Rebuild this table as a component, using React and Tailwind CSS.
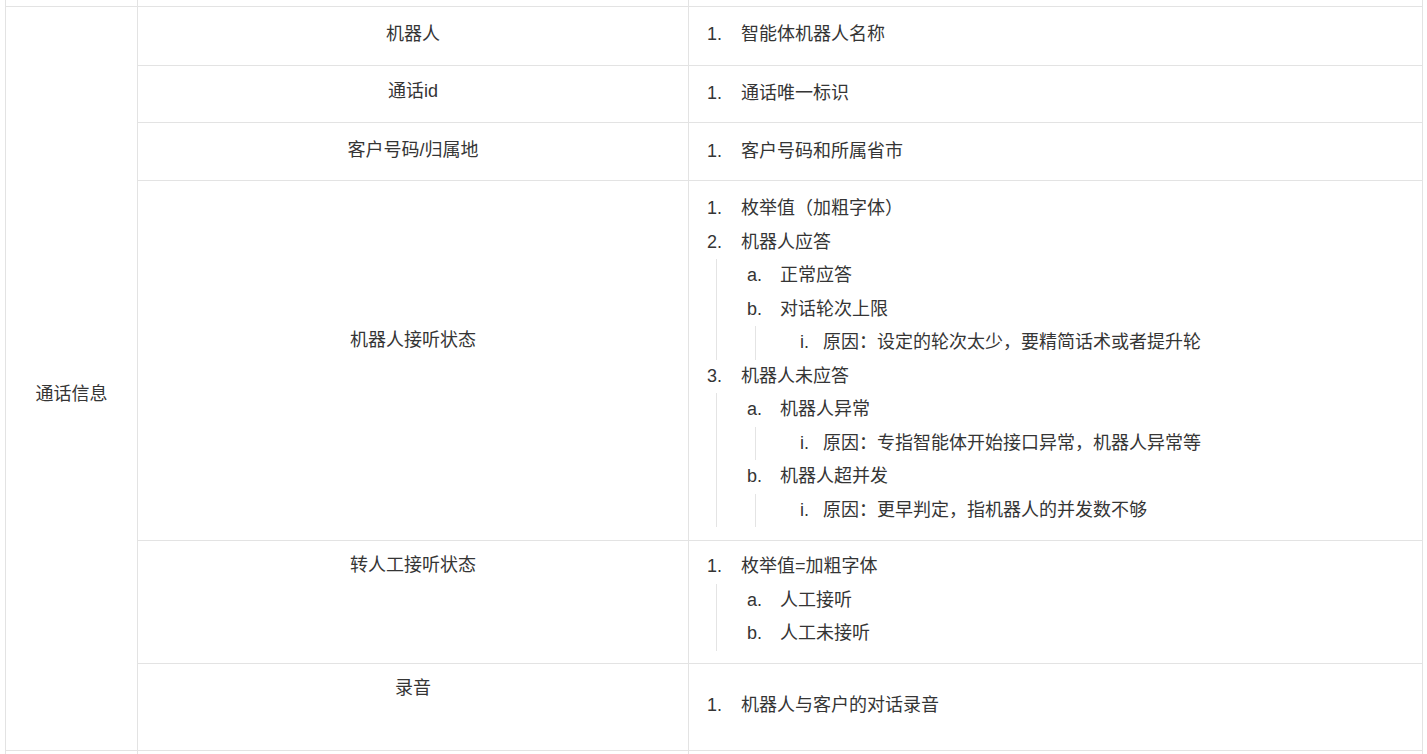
const FONT = "font-['Liberation_Sans','Noto_Sans_CJK_SC',sans-serif]"

// level 1 item: marker right edge ~722, text at 741
function Item1({ n, children }) {
  return (
    <div className="flex leading-[33.5px]">
      <span className="w-[33px] shrink-0 text-right">{n}.</span>
      <span className="ml-[19px]">{children}</span>
    </div>
  )
}

function Item2({ n, children }) {
  return (
    <div className="flex leading-[33.5px]">
      <span className="w-[45px] shrink-0 text-right">{n}.</span>
      <span className="ml-[18px]">{children}</span>
    </div>
  )
}

function Item3({ n, children }) {
  return (
    <div className="flex leading-[33.5px]">
      <span className="w-[53px] shrink-0 text-right">{n}.</span>
      <span className="ml-[14px]">{children}</span>
    </div>
  )
}

const Sub2 = ({ children }) => (
  <div className="ml-[27px] border-l border-[#e4e4e4]">{children}</div>
)
const Sub3 = ({ children }) => (
  <div className="ml-[38px] border-l border-[#e4e4e4]">{children}</div>
)

const ROWS = [
  {
    label: '机器人', h: 'h-[59px]', pl: 'pt-[15px]', pr: 'pt-[11px]',
    body: <Item1 n={1}>智能体机器人名称</Item1>,
  },
  {
    label: '通话id', h: 'h-[57px]', pl: 'pt-[13px]', pr: 'pt-[11px]',
    body: <Item1 n={1}>通话唯一标识</Item1>,
  },
  {
    label: '客户号码/归属地', h: 'h-[58px]', pl: 'pt-[15px]', pr: 'pt-[12px]',
    body: <Item1 n={1}>客户号码和所属省市</Item1>,
  },
  {
    label: '机器人接听状态', h: 'h-[360px]', pl: 'pt-[147px]', pr: 'pt-[11px]',
    body: (
      <>
        <Item1 n={1}>枚举值（加粗字体）</Item1>
        <Item1 n={2}>机器人应答</Item1>
        <Sub2>
          <Item2 n="a">正常应答</Item2>
          <Item2 n="b">对话轮次上限</Item2>
          <Sub3>
            <Item3 n="i">原因：设定的轮次太少，要精简话术或者提升轮</Item3>
          </Sub3>
        </Sub2>
        <Item1 n={3}>机器人未应答</Item1>
        <Sub2>
          <Item2 n="a">机器人异常</Item2>
          <Sub3>
            <Item3 n="i">原因：专指智能体开始接口异常，机器人异常等</Item3>
          </Sub3>
          <Item2 n="b">机器人超并发</Item2>
          <Sub3>
            <Item3 n="i">原因：更早判定，指机器人的并发数不够</Item3>
          </Sub3>
        </Sub2>
      </>
    ),
  },
  {
    label: '转人工接听状态', h: 'h-[123px]', pl: 'pt-[12px]', pr: 'pt-[9px]',
    body: (
      <>
        <Item1 n={1}>枚举值=加粗字体</Item1>
        <Sub2>
          <Item2 n="a">人工接听</Item2>
          <Item2 n="b">人工未接听</Item2>
        </Sub2>
      </>
    ),
  },
  {
    label: '录音', h: 'h-[86px]', pl: 'pt-[12px]', pr: 'pt-[25px]',
    body: <Item1 n={1}>机器人与客户的对话录音</Item1>,
  },
]

export default function App() {
  return (
    <div className={`min-h-screen w-full bg-white text-[18px] text-[#353535] ${FONT}`}>
      <div className="ml-[5px] w-[1418px] border-x border-[#e3e3e3]">
        {/* tail of previous row */}
        <div className="grid h-[7px] grid-cols-[132px_551px_1fr] border-b border-[#e3e3e3]">
          <div className="border-r border-[#e3e3e3]" />
          <div className="border-r border-[#e3e3e3]" />
          <div />
        </div>

        <div className="flex border-b border-[#e3e3e3]">
          <div className="flex w-[132px] shrink-0 items-center justify-center border-r border-[#e3e3e3] pt-[30px] leading-[24px]">
            通话信息
          </div>
          <div className="flex flex-1 flex-col">
            {ROWS.map((r, i) => (
              <div
                key={r.label}
                className={`flex ${r.h} ${i < ROWS.length - 1 ? 'border-b border-[#e3e3e3]' : ''}`}
              >
                <div className={`w-[551px] shrink-0 border-r border-[#e3e3e3] text-center leading-[24px] ${r.pl}`}>
                  {r.label}
                </div>
                <div className={`flex-1 ${r.pr}`}>{r.body}</div>
              </div>
            ))}
          </div>
        </div>

        {/* head of next row */}
        <div className="grid h-[5px] grid-cols-[132px_551px_1fr]">
          <div className="border-r border-[#e3e3e3]" />
          <div className="border-r border-[#e3e3e3]" />
          <div />
        </div>
      </div>
    </div>
  )
}
